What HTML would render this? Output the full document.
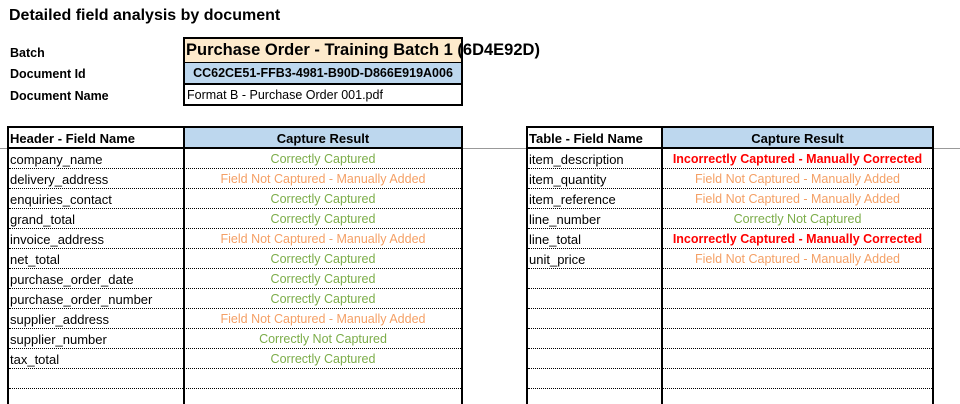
<!DOCTYPE html><html><head><style>
html,body{margin:0;width:960px;height:404px;overflow:hidden}
body{background:#fff;position:relative;font-family:"Liberation Sans",sans-serif;color:#000}
div{position:absolute;box-sizing:border-box;white-space:nowrap}
.l{font-size:12.5px;font-weight:bold;left:10px}
.c{text-align:center;font-size:12.5px}
.g{color:#7cad4a}.o{color:#f4a066}.r{color:#ff0000;font-weight:bold}
</style></head><body>
<div style="left:9px;top:7px;font-size:16px;font-weight:bold">Detailed field analysis by document</div>
<div class="l" style="top:46px">Batch</div>
<div class="l" style="top:67px">Document Id</div>
<div class="l" style="top:89px">Document Name</div>
<div style="left:183px;top:37px;width:280px;height:27px;background:#fdeacc;border:2px solid #000;border-right:none"></div>
<div style="left:461px;top:37px;width:2px;height:68px;background:#000"></div>
<div style="left:186px;top:41px;font-size:16.5px;font-weight:bold">Purchase Order - Training Batch 1 (6D4E92D)</div>
<div style="left:183px;top:63px;width:280px;height:22px;background:#bdd7ee;border:2px solid #000;border-top:none;font-size:12.5px;font-weight:bold;text-align:center;line-height:20px">CC62CE51-FFB3-4981-B90D-D866E919A006</div>
<div style="left:183px;top:84px;width:280px;height:22px;border:2px solid #000;border-top:1px solid #000;font-size:12.5px;line-height:20px;padding-left:2px">Format B - Purchase Order 001.pdf</div>
<div style="left:0;top:148px;width:960px;height:1px;background:#999"></div>
<div id="t1"></div><div id="t2"></div>
<script>
function tbl(x,w1,w2,hdr,rows){
 let h='';const top=126;
 h+=`<div style="left:${x}px;top:${top}px;width:${w1+w2}px;height:278px;border:2px solid #000;border-bottom:none"></div>`;
 h+=`<div style="left:${x+w1}px;top:${top}px;width:${w2}px;height:23px;background:#bdd7ee;border:2px solid #000"></div>`;
 h+=`<div style="left:${x+w1}px;top:${top}px;width:2px;height:278px;background:#000"></div>`;
 h+=`<div style="left:${x}px;top:147px;width:${w1+w2}px;height:2px;background:#000"></div>`;
 h+=`<div style="left:${x+3}px;top:131px;font-size:13px;font-weight:bold">${hdr}</div>`;
 h+=`<div class="c" style="left:${x+w1}px;width:${w2}px;top:131px;font-weight:bold;font-size:13px">Capture Result</div>`;
 for(let i=0;i<12;i++){const y=149+i*20;
  if(y+19<404)h+=`<div style="left:${x+2}px;top:${y+19}px;width:${w1+w2-4}px;border-top:1px dotted #000"></div>`;
  if(rows[i]){h+=`<div style="left:${x+3}px;top:${y+3}px;font-size:13px">${rows[i][0]}</div>`;
   h+=`<div class="c ${rows[i][2]}" style="left:${x+w1}px;width:${w2}px;top:${y+3}px">${rows[i][1]}</div>`;}
 }
 return h;}
const CC=['Correctly Captured','g'],FN=['Field Not Captured - Manually Added','o'],CN=['Correctly Not Captured','g'],IC=['Incorrectly Captured - Manually Corrected','r'];
const L=[['company_name',CC],['delivery_address',FN],['enquiries_contact',CC],['grand_total',CC],['invoice_address',FN],['net_total',CC],['purchase_order_date',CC],['purchase_order_number',CC],['supplier_address',FN],['supplier_number',CN],['tax_total',CC]].map(a=>[a[0],a[1][0],a[1][1]]);
const R=[['item_description',IC],['item_quantity',FN],['item_reference',FN],['line_number',CN],['line_total',IC],['unit_price',FN]].map(a=>[a[0],a[1][0],a[1][1]]);
document.getElementById('t1').outerHTML=tbl(7,176,280,'Header - Field Name',L);
document.getElementById('t2').outerHTML=tbl(526,135,273,'Table - Field Name',R);
</script>
</body></html>
